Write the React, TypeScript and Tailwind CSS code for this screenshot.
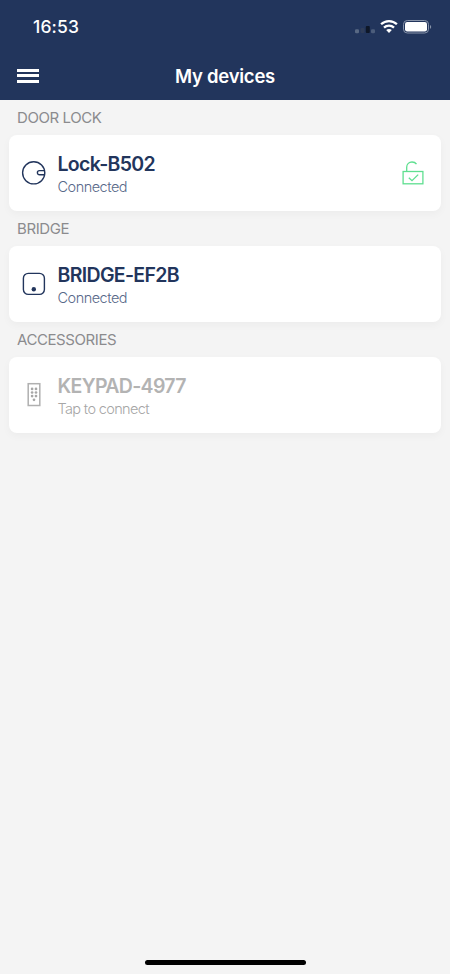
import type { ReactNode } from "react";

const LockIcon = () => (
  <svg width="26" height="26" viewBox="0 0 26 26" fill="none" stroke="#22355c" strokeWidth="1.4">
    <circle cx="12.7" cy="12.8" r="11.1" />
    <path d="M23.6 10.6h-5.1a2.1 2.1 0 0 0 0 4.2h5.1" />
  </svg>
);

const BridgeIcon = () => (
  <svg width="26" height="26" viewBox="0 0 26 26" fill="none">
    <rect x="2.4" y="2.4" width="21" height="21" rx="4.9" stroke="#22355c" strokeWidth="1.4" />
    <circle cx="12.8" cy="18.2" r="2.2" fill="#22355c" />
  </svg>
);

const KeypadIcon = () => (
  <svg width="26" height="26" viewBox="0 0 26 26" fill="#a6a6a6">
    <rect x="7.2" y="1.7" width="11.6" height="21.8" fill="none" stroke="#b0b0b0" strokeWidth="1.5" />
    {[6.9, 10.5, 14.1].map((y) => (
      <g key={y}>
        <circle cx="11.1" cy={y} r="1.35" />
        <circle cx="15" cy={y} r="1.35" />
      </g>
    ))}
    <circle cx="13" cy="17.8" r="1.35" />
  </svg>
);

const UnlockedIcon = () => (
  <svg width="24" height="26" viewBox="0 0 24 26" fill="none" stroke="#5fdf90" strokeWidth="1.3">
    <rect x="2.1" y="11.5" width="19.8" height="12.3" />
    <path d="M5.7 11.5V7.2C5.7 4 8.1 2 11 2c2 0 3.5.7 4.5 2.2M7.8 17.7l3.2 3 6.2-6.1" />
  </svg>
);

function Device({ section, name, status, icon, action, muted = false }: {
  section: string;
  name: string;
  status: string;
  icon: ReactNode;
  action?: ReactNode;
  muted?: boolean;
}) {
  return (
    <section>
      <h2 className="flex h-[35px] items-center pt-[2px] pl-[17px] text-[15px] tracking-[-0.42px] text-[#8b8b8e]">{section}</h2>
      <div className="mx-[9px] flex h-[76px] items-center rounded-[8px] bg-white pr-4 pl-3 shadow-[0_3px_8px_rgba(0,0,0,0.035)]">
        {icon}
        <div className="ml-[10.5px] flex-1 pt-[2px]">
          <div className={`text-[19.5px] leading-6 font-semibold tracking-[-0.67px] ${muted ? "text-[#b3b3b3]" : "text-[#22355c]"}`}>{name}</div>
          <div className={`pt-px text-[14.5px] leading-5 font-light ${muted ? "tracking-[-0.65px] text-[#a6a6a6]" : "tracking-[-0.5px] text-[#586989]"}`}>{status}</div>
        </div>
        {action}
      </div>
    </section>
  );
}

export default function App() {
  return (
    <div className="flex h-[974px] w-[450px] flex-col bg-[#f4f4f4] font-['Inter','Liberation_Sans',sans-serif]">
      <header className="h-[100px] bg-[#22355c] text-white">
        <div className="flex h-[54px] items-center justify-between pr-[18px] pl-[33px]">
          <span className="pt-px text-[17.5px] font-medium tracking-[0.15px]">16:53</span>
          <svg width="78" height="16" viewBox="0 0 78 16" fill="none">
            <rect x="1" y="10.2" width="4" height="4" rx="1.2" fill="#596984" />
            <rect x="6.5" y="9" width="4" height="5" rx="1" fill="#2f3d59" />
            <rect x="11.8" y="7" width="4" height="7" rx="1" fill="#0e1728" />
            <rect x="17" y="10.2" width="4" height="4" rx="1.2" fill="#4c5d7b" />
            <g stroke="#fff" strokeWidth="2.3">
              <path d="M27.1 5.3C31.5 1 38.5 1 42.9 5.3M30 8.6c2.8-2.7 7.2-2.7 10 0" />
            </g>
            <path d="M35 14l-2.8-2.9c1.6-1.4 4-1.4 5.6 0z" fill="#fff" />
            <rect x="49.5" y="1.5" width="25" height="12.5" rx="3.8" stroke="#8894aa" />
            <rect x="51" y="3" width="22" height="9.5" rx="2.2" fill="#fff" />
            <path d="M76 6c1.6.7 1.6 3.2 0 3.9z" fill="#8894aa" />
          </svg>
        </div>
        <div className="grid h-[45px] grid-cols-[1fr_auto_1fr] items-center">
          <button aria-label="Menu" className="mb-[2px] ml-[17px] flex w-[22px] flex-col gap-[2.5px]">
            <span className="h-[3px] bg-white" />
            <span className="h-[3px] bg-white" />
            <span className="h-[3px] bg-white" />
          </button>
          <h1 className="text-[18.5px] font-semibold tracking-[-0.25px]">My devices</h1>
        </div>
      </header>
      <main className="flex-1">
        <Device section="DOOR LOCK" name="Lock-B502" status="Connected" icon={<LockIcon />} action={<UnlockedIcon />} />
        <Device section="BRIDGE" name="BRIDGE-EF2B" status="Connected" icon={<BridgeIcon />} />
        <Device section="ACCESSORIES" name="KEYPAD-4977" status="Tap to connect" icon={<KeypadIcon />} muted />
      </main>
      <div className="mb-[9px] h-[5px] w-[161px] self-center rounded-full bg-black" />
    </div>
  );
}
